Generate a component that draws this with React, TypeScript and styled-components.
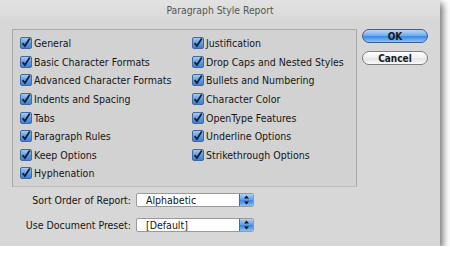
import { createGlobalStyle, styled } from 'styled-components';

const GlobalStyle = createGlobalStyle`
  html, body {
    margin: 0;
    padding: 0;
    background: #ffffff;
  }
  body {
    font-family: "DejaVu Sans Condensed", "DejaVu Sans", sans-serif;
  }
`;

const leftOptions = [
  'General',
  'Basic Character Formats',
  'Advanced Character Formats',
  'Indents and Spacing',
  'Tabs',
  'Paragraph Rules',
  'Keep Options',
  'Hyphenation',
];

const rightOptions = [
  'Justification',
  'Drop Caps and Nested Styles',
  'Bullets and Numbering',
  'Character Color',
  'OpenType Features',
  'Underline Options',
  'Strikethrough Options',
];

const CheckBox = () => (
  <svg width="12" height="12" viewBox="0 0 12 12">
    <defs>
      <linearGradient id="cb" x1="0" y1="0" x2="0" y2="1">
        <stop offset="0" stopColor="#a8d0f6" />
        <stop offset="0.5" stopColor="#5c9de6" />
        <stop offset="1" stopColor="#3a7fdc" />
      </linearGradient>
    </defs>
    <rect x="0.5" y="0.5" width="11" height="11" rx="1.5" fill="url(#cb)" stroke="#44689c" />
    <path d="M2.6 6.2 L4.9 9 L9.8 1.6" fill="none" stroke="#141c28" strokeWidth="1.8" />
  </svg>
);

const Stepper = () => (
  <svg width="7" height="10" viewBox="0 0 7 10">
    <path d="M3.5 0.5 L6 3.5 L1 3.5 Z" fill="#111" />
    <path d="M3.5 9.5 L6 6.5 L1 6.5 Z" fill="#111" />
  </svg>
);

const Option = ({ label }: { label: string }) => (
  <OptionRow>
    <CheckBox />
    <span>{label}</span>
  </OptionRow>
);

const PopUp = ({ value }: { value: string }) => (
  <PopUpBox>
    <PopUpValue>{value}</PopUpValue>
    <PopUpArrows>
      <Stepper />
    </PopUpArrows>
  </PopUpBox>
);

const App = () => {
  return (
    <>
      <GlobalStyle />
      <Window>
        <TitleBar>Paragraph Style Report</TitleBar>
        <Body>
          <GroupBox>
            <OptionColumn>
              {leftOptions.map((item) => (
                <Option key={item} label={item} />
              ))}
            </OptionColumn>
            <OptionColumn>
              {rightOptions.map((item) => (
                <Option key={item} label={item} />
              ))}
            </OptionColumn>
          </GroupBox>
          <ButtonColumn>
            <PushButton $primary>OK</PushButton>
            <PushButton>Cancel</PushButton>
          </ButtonColumn>
        </Body>
        <Settings>
          <SettingLabel>Sort Order of Report:</SettingLabel>
          <PopUp value="Alphabetic" />
          <SettingLabel>Use Document Preset:</SettingLabel>
          <PopUp value="[Default]" />
        </Settings>
      </Window>
    </>
  );
};

export default App;

const Window = styled.div`
  width: 440px;
  height: 246px;
  background: #d7d7d7;
  box-shadow: 3px 3px 7px rgba(0, 0, 0, 0.55);
  display: flex;
  flex-direction: column;
  color: #1e1e1e;
  font-size: 10.5px;
`;

const TitleBar = styled.div`
  height: 20px;
  line-height: 20px;
  text-align: center;
  font-size: 10.3px;
  color: #555555;
  background: linear-gradient(#e2e2e2, #d9d9d9);
`;

const Body = styled.div`
  display: flex;
  padding: 9px 0 0 12px;
  gap: 5px;
`;

const GroupBox = styled.div`
  box-sizing: border-box;
  width: 345px;
  height: 158px;
  border: 1px solid #a9a9a9;
  border-bottom-color: #bdbdbd;
  background: #d2d2d2;
  display: grid;
  grid-template-columns: 172px 1fr;
  padding: 4px 0 0 7px;
`;

const OptionColumn = styled.div`
  display: flex;
  flex-direction: column;
`;

const OptionRow = styled.div`
  display: flex;
  align-items: center;
  gap: 2px;
  height: 18.6px;
  color: #161616;
  white-space: nowrap;
`;

const ButtonColumn = styled.div`
  display: flex;
  flex-direction: column;
  gap: 8px;
`;

const PushButton = styled.div<{ $primary?: boolean }>`
  box-sizing: border-box;
  width: 66px;
  height: 14px;
  border-radius: 7px;
  display: flex;
  align-items: center;
  justify-content: center;
  font-weight: 700;
  font-size: 10px;
  color: #1a1a1a;
  border: 1px solid ${(p) => (p.$primary ? '#3f5f8f' : '#7d7d7d')};
  background: ${(p) =>
    p.$primary
      ? 'linear-gradient(#b9d8f8 0%, #6aa9ee 50%, #3b86e4 55%, #8cc4fa 100%)'
      : 'linear-gradient(#ffffff 0%, #f0f0f0 50%, #e4e4e4 55%, #fafafa 100%)'};
`;

const Settings = styled.div`
  display: grid;
  grid-template-columns: 131px 118px;
  column-gap: 5px;
  row-gap: 11px;
  margin-top: 6px;
  align-items: center;
`;

const SettingLabel = styled.div`
  text-align: right;
  color: #161616;
  white-space: nowrap;
`;

const PopUpBox = styled.div`
  box-sizing: border-box;
  height: 14px;
  display: flex;
  border: 1px solid #9a9a9a;
  border-radius: 2px;
  background: #ffffff;
  overflow: hidden;
`;

const PopUpValue = styled.div`
  flex: 1;
  padding-left: 9px;
  line-height: 12px;
  color: #161616;
`;

const PopUpArrows = styled.div`
  width: 13px;
  display: flex;
  align-items: center;
  justify-content: center;
  background: linear-gradient(#aed2f6, #5a9ce8 50%, #3a84e2 55%, #8dc2f6);
  border-left: 1px solid #4c6d9c;
`;
